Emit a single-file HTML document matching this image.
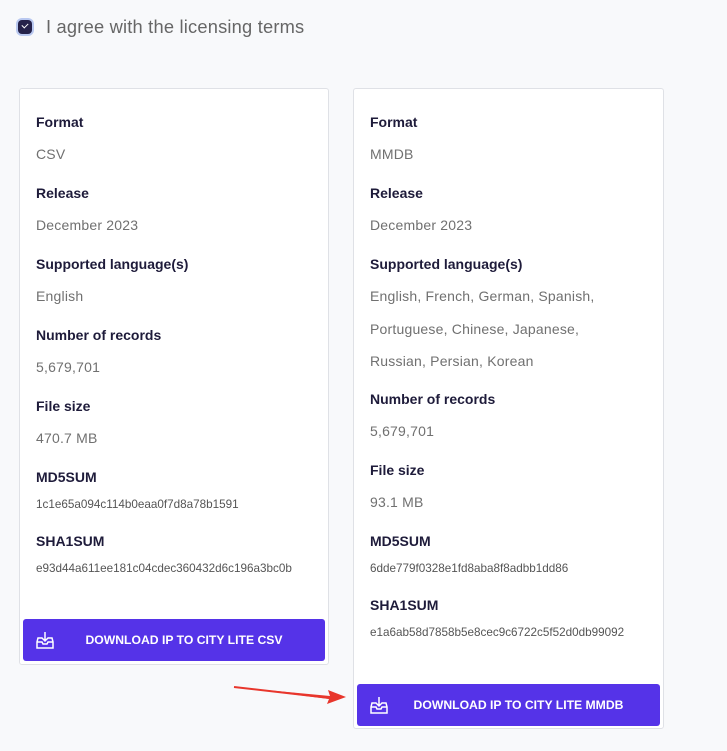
<!DOCTYPE html>
<html><head><style>
body{margin:0;background:#f8f9fb;font-family:"Liberation Sans",sans-serif;width:727px;height:751px;overflow:hidden;position:relative}
.chk{position:absolute;left:18px;top:20px;width:14px;height:14px;border-radius:4px;background:#25224a;box-shadow:0 0 0 2px #b9c8f0}
.chk:after{content:"";position:absolute;left:4px;top:3px;width:5px;height:3px;border-left:1.5px solid #fff;border-bottom:1.5px solid #fff;transform:rotate(-45deg)}
.agree{position:absolute;left:46px;top:16px;font-size:18.3px;color:#666;font-weight:300;letter-spacing:.2px}
.card{position:absolute;top:88px;background:#fff;border:1px solid #dfe1e6;border-radius:3px;box-sizing:border-box;padding:17px 3px 3px 3px}
.l{font-weight:bold;font-size:14px;color:#1e1b3a;line-height:32px;padding-left:13px}
.v{font-size:14px;color:#707070;line-height:32px;padding-left:13px;margin-bottom:7px;letter-spacing:.2px;white-space:nowrap}
.h{font-size:11.7px;color:#555;line-height:24px;padding-left:13px;margin-bottom:8px}
.btn{background:#5533e8;color:#fff;border-radius:3px;height:42px;display:flex;align-items:center;font-weight:bold;font-size:12.2px;position:relative}
.btn svg{position:absolute;left:13px;top:12px}
.btn span{width:100%;text-align:center;padding-left:20px}
</style></head><body>
<div class="chk"></div><div class="agree">I agree with the licensing terms</div>
<div class="card" style="left:19px;width:310px;height:577px">
<div class="l">Format</div><div class="v">CSV</div>
<div class="l">Release</div><div class="v">December 2023</div>
<div class="l">Supported language(s)</div><div class="v">English</div>
<div class="l">Number of records</div><div class="v">5,679,701</div>
<div class="l">File size</div><div class="v">470.7 MB</div>
<div class="l">MD5SUM</div><div class="h">1c1e65a094c114b0eaa0f7d8a78b1591</div>
<div class="l">SHA1SUM</div><div class="h">e93d44a611ee181c04cdec360432d6c196a3bc0b</div>
<div class="btn" style="margin-top:38px"><svg width="18" height="18" viewBox="0 0 18 18" fill="none" stroke="#fff" stroke-width="1.5"><path d="M9 1v9M5.5 6.5L9 10l3.5-3.5M6 7H2l-1 4v6h16v-6l-1-4h-4M1 11h5l1 2h4l1-2h5"/></svg><span>DOWNLOAD IP TO CITY LITE CSV</span></div>
</div>
<div class="card" style="left:353px;width:311px;height:641px">
<div class="l">Format</div><div class="v">MMDB</div>
<div class="l">Release</div><div class="v">December 2023</div>
<div class="l">Supported language(s)</div><div class="v" style="line-height:32.5px;margin-bottom:5px">English, French, German, Spanish,<br>Portuguese, Chinese, Japanese,<br>Russian, Persian, Korean</div>
<div class="l">Number of records</div><div class="v">5,679,701</div>
<div class="l">File size</div><div class="v">93.1 MB</div>
<div class="l">MD5SUM</div><div class="h">6dde779f0328e1fd8aba8f8adbb1dd86</div>
<div class="l">SHA1SUM</div><div class="h">e1a6ab58d7858b5e8cec9c6722c5f52d0db99092</div>
<div class="btn" style="margin-top:39px"><svg width="18" height="18" viewBox="0 0 18 18" fill="none" stroke="#fff" stroke-width="1.5"><path d="M9 1v9M5.5 6.5L9 10l3.5-3.5M6 7H2l-1 4v6h16v-6l-1-4h-4M1 11h5l1 2h4l1-2h5"/></svg><span>DOWNLOAD IP TO CITY LITE MMDB</span></div>
</div>
<svg style="position:absolute;left:230px;top:682px" width="120" height="24"><path d="M4 5L100 14L98 8L116 15L97 22L99 17Z" fill="#e8362c"/><path d="M4 5L100 16" stroke="#e8362c" stroke-width="2"/></svg>
</body></html>
